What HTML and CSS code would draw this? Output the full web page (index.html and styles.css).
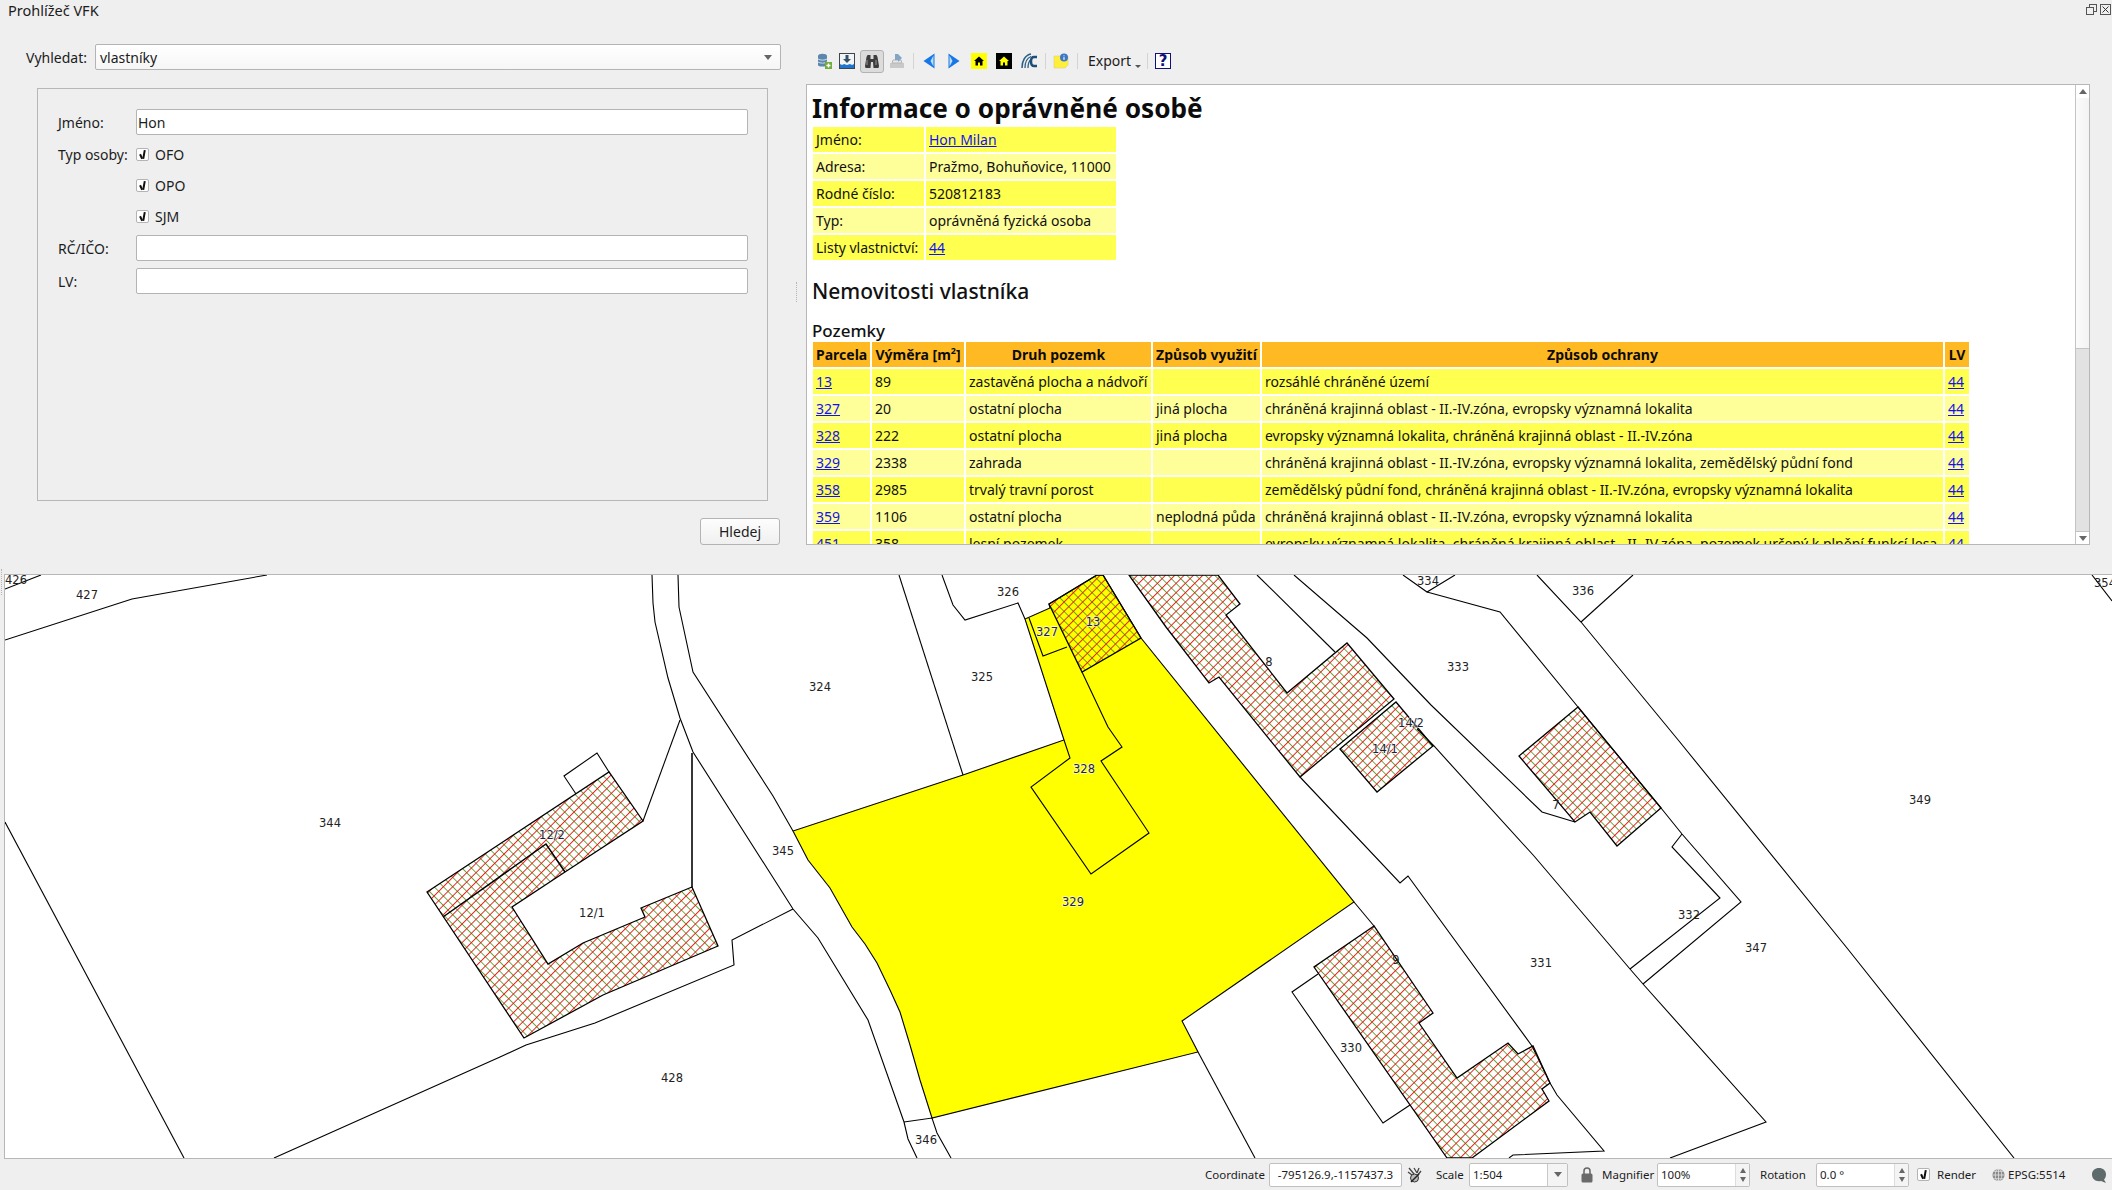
FILE: index.html
```html
<!DOCTYPE html>
<html lang="cs">
<head>
<meta charset="utf-8">
<title>Prohlížeč VFK</title>
<link rel="stylesheet" href="styles.css">
</head>
<body>
<header class="titlebar">
  <span class="title">Prohlížeč VFK</span>
  <span class="winbtns">
    <svg class="winbtn" viewBox="0 0 11 11"><rect x="3.500" y="0.500" width="7" height="7" fill="none" stroke="#555"/><rect x="0.500" y="3.500" width="7" height="7" fill="#efefef" stroke="#555"/></svg>
    <svg class="winbtn" viewBox="0 0 11 11"><rect x="0.500" y="0.500" width="10" height="10" fill="none" stroke="#555"/><path d="M2.500 2.500l6 6M8.500 2.500l-6 6" stroke="#333" fill="none"/></svg>
  </span>
</header>

<div class="top">
  <section class="search">
    <div class="combo-row">
      <label class="combo-label">Vyhledat:</label>
      <div class="combo"><span>vlastníky</span><i class="arrow"></i></div>
    </div>
    <div class="group">
      <div class="form">
        <label class="lbl">Jméno:</label><div class="input">Hon</div>
        <label class="lbl">Typ osoby:</label><div class="check-row"><span class="check"></span>OFO</div>
        <span></span><div class="check-row"><span class="check"></span>OPO</div>
        <span></span><div class="check-row"><span class="check"></span>SJM</div>
        <label class="lbl">RČ/IČO:</label><div class="input"></div>
        <label class="lbl">LV:</label><div class="input"></div>
      </div>
    </div>
    <div class="btn-row"><button class="button">Hledej</button></div>
  </section>
  <i class="grip grip-v"></i>

  <section class="info">
    <div class="toolbar">
      <svg class="ti" viewBox="0 0 16 16"><path d="M1 3c0-3 9-3 9 0v9c0 2-9 2-9 0z" fill="#5d86ad"/><path d="M1 6c2 1.500 7 1.500 9 0M1 9c2 1.500 7 1.500 9 0" stroke="#cfe0ee" fill="none"/><rect x="8" y="9" width="7" height="7" fill="#6fae3c"/><path d="M11.500 10.500v4M9.500 12.500h4" stroke="#fff" stroke-width="1.400"/></svg>
      <svg class="ti ms6" viewBox="0 0 16 16"><rect x="0.500" y="0.500" width="15" height="15" fill="#f4f4f4" stroke="#3a4654"/><path d="M6.500 2h3v4h2.500L8 10 4 6h2.500z" fill="#33516f"/><path d="M1 11l2 1 2-1 3 1 3-1 2 1 2-1v4H1z" fill="#1f74d0"/></svg>
      <span class="tb-active ms5"><svg class="ti" viewBox="0 0 16 16"><path d="M1 13l1.500-9 1-2h3v4h3V2h3l1 2 1.500 9-.5 2H9.500L9 9H7l-.5 6H1.500z" fill="#3d3d3d"/><path d="M3 7v5M12 7v5" stroke="#999" fill="none"/></svg></span>
      <svg class="ti ms5" viewBox="0 0 16 16"><path d="M1 10h14v5H1z" fill="#c9c9c9"/><path d="M3 10l1-3h8l1 3z" fill="#e8e8e8" stroke="#b5b5b5"/><path d="M6 1h3l4 4-4 4V7H6z" fill="#83a6c6"/></svg>
      <i class="sep ms8"></i>
      <svg class="ti ms7" viewBox="0 0 16 16"><path d="M13.500 0.500L2.500 8l11 7.500z" fill="#1678e6"/><path d="M12.500 2.500L9.500 8l3 5.500z" fill="#bcdcf8"/></svg>
      <svg class="ti ms9" viewBox="0 0 16 16"><path d="M2.500 0.500L13.500 8l-11 7.500z" fill="#1678e6"/><path d="M3.500 2.500L6.500 8l-3 5.500z" fill="#bcdcf8"/></svg>
      <svg class="ti ms9" viewBox="0 0 16 16"><rect width="16" height="16" fill="#ffff00"/><path d="M8 3.500L3 8h1.500v4.500h2.500V9.500h2v3h2.500V8H13z" fill="#000"/></svg>
      <svg class="ti ms9" viewBox="0 0 16 16"><rect width="16" height="16" fill="#000"/><path d="M8 3.500L3 8h1.500v4.500h2.500V9.500h2v3h2.500V8H13z" fill="#ffff00"/></svg>
      <svg class="ti ms9" viewBox="0 0 16 16"><path d="M1 15C1 8 4 2 10 1" fill="none" stroke="#2c5f88" stroke-width="1.500"/><path d="M4 15C4 9 6 5 10 3.500M7 15C7 11 8 8 10 6.500" fill="none" stroke="#2c5f88" stroke-width="1.300"/><path d="M16 4h-3c-2 0-3 1.500-3 4.500s1 4.500 3 4.500h3" fill="none" stroke="#1d4d78" stroke-width="2.500"/></svg>
      <i class="sep ms8"></i>
      <svg class="ti ms7" viewBox="0 0 16 16"><path d="M1 3h14v9l-3 3H1z" fill="#ffef3a" stroke="#dcd080" stroke-width=".6"/><circle cx="11" cy="4.500" r="4" fill="#3d78c8"/><path d="M11 2.500v.8M11 4.200v2.500" stroke="#fff" stroke-width="1.200"/></svg>
      <i class="sep ms8"></i>
      <span class="export ms10">Export<i class="tiny-arrow"></i></span>
      <i class="sep"></i>
      <span class="help ms7">?</span>
    </div>

    <div class="browser">
      <div class="doc">
        <h1>Informace o oprávněné osobě</h1>
        <table class="t-info">
          <tr><td class="c-k">Jméno:</td><td class="c-v"><a href="#">Hon Milan</a></td></tr>
          <tr><td class="c-k">Adresa:</td><td class="c-v">Pražmo, Bohuňovice, 11000</td></tr>
          <tr><td class="c-k">Rodné číslo:</td><td class="c-v">520812183</td></tr>
          <tr><td class="c-k">Typ:</td><td class="c-v">oprávněná fyzická osoba</td></tr>
          <tr><td class="c-k">Listy vlastnictví:</td><td class="c-v"><a href="#">44</a></td></tr>
        </table>
        <h2>Nemovitosti vlastníka</h2>
        <h3>Pozemky</h3>
        <table class="t-land">
          <colgroup><col class="w1"><col class="w2"><col class="w3"><col class="w4"><col class="w5"><col class="w6"></colgroup>
          <thead><tr><th>Parcela</th><th>Výměra [m<sup>2</sup>]</th><th>Druh pozemk</th><th>Způsob využití</th><th>Způsob ochrany</th><th>LV</th></tr></thead>
          <tbody>
            <tr><td><a href="#">13</a></td><td>89</td><td>zastavěná plocha a nádvoří</td><td></td><td>rozsáhlé chráněné území</td><td><a href="#">44</a></td></tr>
            <tr><td><a href="#">327</a></td><td>20</td><td>ostatní plocha</td><td>jiná plocha</td><td>chráněná krajinná oblast - II.-IV.zóna, evropsky významná lokalita</td><td><a href="#">44</a></td></tr>
            <tr><td><a href="#">328</a></td><td>222</td><td>ostatní plocha</td><td>jiná plocha</td><td>evropsky významná lokalita, chráněná krajinná oblast - II.-IV.zóna</td><td><a href="#">44</a></td></tr>
            <tr><td><a href="#">329</a></td><td>2338</td><td>zahrada</td><td></td><td>chráněná krajinná oblast - II.-IV.zóna, evropsky významná lokalita, zemědělský půdní fond</td><td><a href="#">44</a></td></tr>
            <tr><td><a href="#">358</a></td><td>2985</td><td>trvalý travní porost</td><td></td><td>zemědělský půdní fond, chráněná krajinná oblast - II.-IV.zóna, evropsky významná lokalita</td><td><a href="#">44</a></td></tr>
            <tr><td><a href="#">359</a></td><td>1106</td><td>ostatní plocha</td><td>neplodná půda</td><td>chráněná krajinná oblast - II.-IV.zóna, evropsky významná lokalita</td><td><a href="#">44</a></td></tr>
            <tr><td><a href="#">451</a></td><td>358</td><td>lesní pozemek</td><td></td><td>evropsky významná lokalita, chráněná krajinná oblast - II.-IV.zóna, pozemek určený k plnění funkcí lesa</td><td><a href="#">44</a></td></tr>
          </tbody>
        </table>
      </div>
      <div class="scrollbar">
        <div class="sb-btn"><i class="sb-up"></i></div>
        <div class="sb-thumb"></div>
        <div class="sb-track"></div>
        <div class="sb-btn sb-btn-end"><i class="sb-down"></i></div>
      </div>
    </div>
  </section>
</div>

<i class="grip grip-h"></i>
<main class="map">
  <svg class="canvas" viewBox="5 575 2107 583" width="2107" height="583">
    <defs>
      <pattern id="hatch" patternUnits="userSpaceOnUse" width="6.600" height="6.600" patternTransform="rotate(45)">
        <path d="M0 3.300H6.600" stroke="#4f9416" stroke-width=".8"/>
        <path d="M3.300 0V6.600" stroke="#ea1410" stroke-width=".9"/>
      </pattern>
    </defs>

    <!-- selected parcels -->
    <polygon class="sel" points="793,831 808,860 830,888 852,927 865,944 877,963 890,990 900,1012 910,1045 920,1080 932,1118 1198,1052 1182,1021 1354,902 1141,638 1103,575 1097,575 1049,604 1050,608 1025,619 1064,740 963,775"/>

    <!-- parcel boundaries -->
    <polyline class="ln" points="5,589 41,575"/>
    <polyline class="ln" points="5,640 132,599 267,575"/>
    <polyline class="ln" points="5,822 184,1158"/>
    <polyline class="ln" points="274,1158 500,1057 526,1045 595,1023 734,965 732,940 793,909"/>
    <polyline class="ln" points="652,575 653,603 655,622 668,678 680,718 693,752 793,909 818,938 868,1020 904,1122 908,1139 917,1158"/>
    <polyline class="ln" points="678,575 679,607 693,672 773,796 793,831"/>
    <polyline class="ln" points="899,575 963,775"/>
    <polyline class="ln" points="942,575 953,605 965,620 1018,603 1025,619"/>
    <polyline class="ln" points="1029,618 1043,656 1067,647"/>
    <polyline class="ln" points="1064,740 1070,758 1031,787 1091,874 1149,833 1101,761 1122,747 1108,727 1082,672"/>
    <polyline class="ln" points="904,1122 932,1118 937,1133 951,1158"/>
    <polyline class="ln" points="1198,1052 1255,1158"/>
    <polyline class="ln" points="1257,575 1335,652"/>
    <polyline class="ln" points="1294,575 1367,638 1431,705 1542,812 1575,822"/>
    <polyline class="ln" points="1300,777 1400,883 1408,876 1532,1046 1550,1083 1557,1095 1604,1151 1513,1155 1509,1158"/>
    <polyline class="ln" points="1354,902 1374,926"/>
    <polyline class="ln" points="1403,575 1427,592 1455,575"/>
    <polyline class="ln" points="1427,592 1500,612 1578,707 1661,808 1682,834 1741,902 1643,984"/>
    <polyline class="ln" points="1417,729 1434,746 1534,856 1630,969 1643,984 1766,1122 1670,1158"/>
    <polyline class="ln" points="1630,969 1720,898 1672,847 1682,834"/>
    <polyline class="ln" points="1537,575 1581,622 1679,741 1847,948 2014,1158"/>
    <polyline class="ln" points="1581,622 1633,575"/>
    <polyline class="ln" points="2092,575 2112,601"/>
    <polyline class="ln" points="1318,974 1292,992 1383,1123 1410,1105"/>
    <polyline class="ln" points="576,794 564,776 597,753 609,772"/>
    <polyline class="ln" points="643,821 680,720"/>
    <line class="ln wide" x1="692" y1="753" x2="692" y2="887"/>

    <!-- buildings -->
    <polygon class="bld" points="427,892 609,772 643,821 565,872 512,907 548,964 583,943 645,917 641,908 692,887 718,946 603,995 524,1038"/>
    <polyline class="ln strong" points="443,917 546,844 565,872"/>
    <polygon class="bld" points="1049,604 1097,575 1103,575 1141,638 1082,672"/>
    <polygon class="bld" points="1129,575 1166,627 1209,683 1219,677 1300,777 1394,699 1347,643 1287,693 1226,615 1240,604 1218,575"/>
    <polygon class="bld" points="1340,749 1396,702 1433,746 1377,792"/>
    <polygon class="bld" points="1578,707 1519,756 1575,822 1590,812 1617,846 1661,808"/>
    <polygon class="bld" points="1374,926 1314,967 1447,1158 1472,1158 1549,1101 1542,1089 1550,1083 1533,1046 1518,1054 1508,1043 1457,1078 1419,1023 1433,1013"/>

    <!-- labels -->
    <text class="lab" x="16" y="580">426</text>
    <text class="lab" x="87" y="595">427</text>
    <text class="lab" x="330" y="823">344</text>
    <text class="lab halo" x="552" y="835">12/2</text>
    <text class="lab" x="592" y="913">12/1</text>
    <text class="lab" x="820" y="687">324</text>
    <text class="lab" x="982" y="677">325</text>
    <text class="lab" x="783" y="851">345</text>
    <text class="lab" x="672" y="1078">428</text>
    <text class="lab" x="926" y="1140">346</text>
    <text class="lab" x="1008" y="592">326</text>
    <text class="lab halo" x="1047" y="632">327</text>
    <text class="lab halo" x="1093" y="622">13</text>
    <text class="lab halo" x="1084" y="769">328</text>
    <text class="lab halo" x="1073" y="902">329</text>
    <text class="lab" x="1269" y="662">8</text>
    <text class="lab halo" x="1411" y="723">14/2</text>
    <text class="lab halo" x="1385" y="749">14/1</text>
    <text class="lab" x="1428" y="581">334</text>
    <text class="lab" x="1583" y="591">336</text>
    <text class="lab" x="1458" y="667">333</text>
    <text class="lab" x="1920" y="800">349</text>
    <text class="lab" x="1556" y="805">7</text>
    <text class="lab" x="1689" y="915">332</text>
    <text class="lab" x="1756" y="948">347</text>
    <text class="lab" x="1541" y="963">331</text>
    <text class="lab" x="1396" y="960">9</text>
    <text class="lab" x="1351" y="1048">330</text>
    <text class="lab" x="2105" y="583">354</text>
  </svg>
</main>

<footer class="status">
  <span class="st-text w59">Coordinate</span>
  <div class="field ms5 w133 centered">-795126.9,-1157437.3</div>
  <svg class="si ms5" viewBox="0 0 15 16"><path d="M2 1l5 6M7 1l3 5M12 1l-2 5M1 5l4 3M14 4l-4 5" stroke="#444" stroke-width="1.300" fill="none"/><circle cx="7.500" cy="11" r="4" fill="#bbb" stroke="#333"/><path d="M4 15L12 7" stroke="#222" stroke-width="1.500"/></svg>
  <span class="st-text ms14 w28">Scale</span>
  <div class="field ms5 w99 with-drop"><span>1:504</span><i class="drop"><i class="arrow"></i></i></div>
  <svg class="lock ms13" viewBox="0 0 12 16"><path d="M3 7V4a3 3 0 0 1 6 0v3" fill="none" stroke="#666" stroke-width="1.500"/><rect x="0.500" y="6.500" width="11" height="9" rx="1.500" fill="#6a6a6a"/></svg>
  <span class="st-text ms9 w51">Magnifier</span>
  <div class="field ms4 w93 with-spin"><span>100%</span><i class="spin"><i class="sp-up"></i><i class="sp-dn"></i></i></div>
  <span class="st-text ms10 w45">Rotation</span>
  <div class="field ms11 w93 with-spin"><span>0.0 °</span><i class="spin"><i class="sp-up"></i><i class="sp-dn"></i></i></div>
  <span class="check ms8"></span>
  <span class="st-text ms7 w37">Render</span>
  <svg class="si ms17" viewBox="0 0 16 16"><circle cx="8" cy="8" r="6.500" fill="#8a8a8a"/><path d="M1.500 8h13M8 1.500v13M3 4h10M3 12h10" stroke="#e8e8e8" stroke-width=".8" fill="none"/><ellipse cx="8" cy="8" rx="3.500" ry="6.500" fill="none" stroke="#e8e8e8" stroke-width=".8"/></svg>
  <span class="st-text ms2 w58">EPSG:5514</span>
  <svg class="si msg ms25" viewBox="0 0 16 16"><path d="M8 1c4 0 7 2.500 7 6.500 0 2.500-1 4-2 5l2 3.500-5-2c-.8.200-1.300.200-2 .200-4 0-7-2.700-7-6.700S4 1 8 1z" fill="#5f6b6b"/></svg>
</footer>
</body>
</html>
```

FILE: styles.css
```css
* { box-sizing: border-box; }
html, body { margin: 0; padding: 0; }
body {
  width: 2112px;
  height: 1190px;
  overflow: hidden;
  background: #efefef;
  color: #1c1c1c;
  font-family: "Noto Sans", "Liberation Sans", sans-serif;
  font-size: 14px;
  display: flex;
  flex-direction: column;
  position: relative;
}

.titlebar { height: 22px; display: flex; justify-content: space-between; align-items: center; padding: 0 0 3px 8px; flex: none; }
.title { font-size: 14.500px; }
.winbtns { display: flex; gap: 3px; margin-right: 1px; }
.winbtn { width: 11px; height: 11px; display: block; }

.top { height: 552px; flex: none; display: flex; }
.search { width: 806px; flex: none; }
.combo-row { display: flex; align-items: center; margin: 22px 0 0 26px; height: 26px; }
.combo-label { width: 69px; }
.combo { width: 686px; height: 26px; border: 1px solid #b4b4b4; border-radius: 2px; background: linear-gradient(#fff, #f6f6f6); display: flex; align-items: center; justify-content: space-between; padding: 0 8px 0 4px; }
.arrow { width: 0; height: 0; border-left: 4px solid transparent; border-right: 4px solid transparent; border-top: 5px solid #666; display: block; }

.group { width: 731px; height: 413px; margin: 18px 0 0 37px; border: 1px solid #b7b7b7; padding: 20px 0 0 20px; }
.form { display: grid; grid-template-columns: 78px 612px; grid-template-rows: 27px 26px 26px 27px 28px 26px; row-gap: 5px; align-items: start; }
.input { height: 26px; background: #fff; border: 1px solid #b4b4b4; border-radius: 2px; padding: 0 1px; line-height: 25px; }
.lbl { line-height: 27px; }
.check-row { display: flex; align-items: center; height: 26px; gap: 6px; }
.check { width: 13px; height: 13px; flex: none; display: block; background: #fff; border: 1px solid #b4b4b4; border-radius: 2px; position: relative; }
.check::before { content: ""; position: absolute; left: 2.500px; top: 5px; width: 2px; height: 4.500px; background: #111; transform: rotate(-25deg); }
.check::after { content: ""; position: absolute; left: 5.500px; top: 1px; width: 1.800px; height: 9px; background: #111; transform: rotate(10deg); }

.btn-row { margin: 17px 0 0 700px; }
.button { width: 80px; height: 27px; border: 1px solid #b4b4b4; border-radius: 3px; background: linear-gradient(#fdfdfd, #f0f0f0); font: 14px "Noto Sans", sans-serif; color: #1c1c1c; padding: 0; display: block; }

.grip { position: absolute; display: block; }
.grip-v { left: 796px; top: 282px; height: 20px; border-left: 1px dotted #b4b4b4; }
.grip-h { left: 1px; top: 569px; height: 26px; border-left: 1px dotted #b4b4b4; }

.info { width: 1284px; flex: none; }
.toolbar { height: 62px; display: flex; align-items: center; padding: 16px 0 0 11px; }
.ti { width: 16px; height: 16px; display: block; flex: none; }
.sep { width: 1px; height: 16px; background: #d4d4d4; display: block; flex: none; }
.tb-active { width: 24px; height: 23px; border: 1px solid #b2b2b2; border-radius: 3px; background: #dcdcdc; display: flex; align-items: center; justify-content: center; flex: none; }
.export { width: 59px; flex: none; font-size: 14px; position: relative; line-height: 16px; }
.tiny-arrow { position: absolute; left: 47px; top: 12px; width: 0; height: 0; border-left: 3px solid transparent; border-right: 3px solid transparent; border-top: 3px solid #555; }
.help { width: 16px; height: 16px; border: 1px solid #10107a; background: #fff; color: #10107a; font: bold 15px/14px "DejaVu Sans", sans-serif; text-align: center; flex: none; }

.ms2 { margin-left: 2px; } .ms4 { margin-left: 4px; } .ms5 { margin-left: 5px; } .ms6 { margin-left: 6px; } .ms7 { margin-left: 7px; } .ms8 { margin-left: 8px; } .ms9 { margin-left: 9px; } .ms10 { margin-left: 10px; } .ms11 { margin-left: 11px; } .ms13 { margin-left: 13px; } .ms14 { margin-left: 14px; } .ms17 { margin-left: 17px; } .ms25 { margin-left: 25px; }

.browser { height: 461px; border: 1px solid #b7b7b7; background: #fff; display: flex; overflow: hidden; }
.doc { flex: 1; min-width: 0; padding: 0 0 0 5px; overflow: hidden; color: #111; font-size: 14px; }
.scrollbar { width: 14px; flex: none; border-left: 1px solid #c4c4c4; display: flex; flex-direction: column; }
.sb-btn { height: 13px; background: #fff; flex: none; display: flex; align-items: center; justify-content: center; }
.sb-btn-end { border-top: 1px solid #c4c4c4; }
.sb-up { border-left: 4px solid transparent; border-right: 4px solid transparent; border-bottom: 5px solid #666; }
.sb-down { border-left: 4px solid transparent; border-right: 4px solid transparent; border-top: 5px solid #666; }
.sb-thumb { height: 251px; flex: none; background: linear-gradient(90deg, #fbfbfb, #f3f3f3); border-bottom: 1px solid #c4c4c4; }
.sb-track { flex: 1; background: #e2e2e2; }

h1 { margin: 6px 0 0; font-size: 26.200px; line-height: 35px; font-weight: 700; color: #0c0c0c; }
h2 { margin: 16px 0 0; font-size: 21px; line-height: 27px; font-weight: 500; }
h3 { margin: 15px 0 0; font-size: 17px; line-height: 21px; font-weight: 500; }
a { color: #1212f0; text-decoration: underline; }

table { border-collapse: separate; border-spacing: 2px; table-layout: fixed; }
td, th { padding: 0 3px; height: 25px; line-height: 25px; white-space: nowrap; overflow: hidden; }
.t-info { width: 307px; margin: -1px 0 0 -1px; }
.c-k { width: 111px; }
.c-v { width: 190px; }
.t-info tr:nth-child(odd) td { background: #ffff50; }
.t-info tr:nth-child(even) td { background: #ffff99; }
.t-land { width: 1160px; margin-top: -1px; margin-left: -1px; }
.t-land th { background: #ffb923; font-weight: 700; text-align: center; color: #0c0c0c; }
.t-land tbody tr:nth-child(odd) td { background: #ffff50; }
.t-land tbody tr:nth-child(even) td { background: #ffff99; }
sup { font-size: 9px; line-height: 0; }
.w1 { width: 57px; } .w2 { width: 92px; } .w3 { width: 185px; } .w4 { width: 107px; } .w5 { width: 681px; } .w6 { width: 24px; }

.map { height: 585px; flex: none; margin-left: 4px; background: #fff; border-left: 1px solid #b7b7b7; border-top: 1px solid #b7b7b7; border-bottom: 1px solid #b7b7b7; overflow: hidden; }
.canvas { display: block; }
.ln { fill: none; stroke: #000; stroke-width: 1.100; }
.wide { stroke-width: 1.800; stroke: #222; }
.strong { stroke-width: 1.500; }
.sel { fill: #ffff00; stroke: #000; stroke-width: 1.100; }
.bld { fill: url(#hatch); stroke: #000; stroke-width: 1.300; }
.lab { font-family: "DejaVu Sans", sans-serif; font-size: 11.500px; text-anchor: middle; dominant-baseline: central; fill: #222; }
.halo { fill: #222238; stroke: #fff; stroke-width: 1.400px; stroke-opacity: .75; paint-order: stroke; }

.status { flex: 1; display: flex; align-items: center; padding-left: 1205px; font-size: 11.500px; }
.st-text { white-space: nowrap; flex: none; }
.w59 { width: 59px; } .w133 { width: 133px; } .w28 { width: 28px; } .w99 { width: 99px; } .w51 { width: 51px; } .w93 { width: 93px; } .w45 { width: 45px; } .w37 { width: 37px; } .w58 { width: 58px; }
.si { width: 15px; height: 16px; flex: none; display: block; }
.msg { width: 16px; }
.lock { width: 12px; height: 16px; flex: none; display: block; }
.field { height: 24px; flex: none; background: #fff; border: 1px solid #c0c0c0; border-radius: 2px; display: flex; align-items: center; padding-left: 3px; overflow: hidden; white-space: nowrap; }
.centered { justify-content: center; padding: 0; }
.with-drop, .with-spin { justify-content: space-between; }
.drop { width: 20px; height: 100%; border-left: 1px solid #c8c8c8; background: #f4f4f4; display: flex; align-items: center; justify-content: center; }
.spin { width: 14px; height: 100%; background: #f4f4f4; border-left: 1px solid #ddd; display: flex; flex-direction: column; align-items: center; justify-content: center; gap: 4px; }
.sp-up { border-left: 3.500px solid transparent; border-right: 3.500px solid transparent; border-bottom: 5px solid #666; }
.sp-dn { border-left: 3.500px solid transparent; border-right: 3.500px solid transparent; border-top: 5px solid #666; }
```
